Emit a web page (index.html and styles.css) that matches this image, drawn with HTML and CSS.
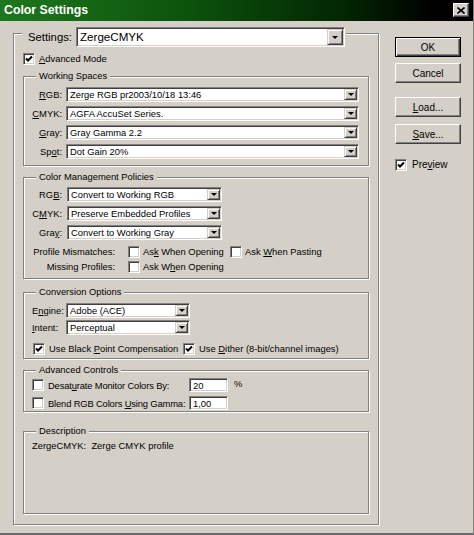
FILE: index.html
```html
<!DOCTYPE html>
<html>
<head>
<meta charset="utf-8">
<title>Color Settings</title>
<link rel="stylesheet" href="styles.css">
</head>
<body>
<div class="window">
  <div class="titlebar">
    <span class="title">Color Settings</span>
    <span class="close"><svg width="8" height="7" viewBox="0 0 8 7"><path d="M0.5 0.5 L7.5 6.5 M7.5 0.5 L0.5 6.5" stroke="#000" stroke-width="1.6" fill="none"/></svg></span>
  </div>
  <div class="client">
    <div class="main-group">
      <div class="settings-legend">
        <span class="settings-label">Settings:</span>
        <div class="combo combo-large"><span class="combo-text">ZergeCMYK</span><span class="combo-btn"><i class="tri"></i></span></div>
      </div>

      <div class="check adv-mode"><span class="box"><svg class="tick" viewBox="0 0 8 8"><path d="M1 3.5 L3 5.5 L7 1.5" stroke="#000" stroke-width="2" fill="none"/></svg></span><span><u>A</u>dvanced Mode</span></div>

      <div class="group ws">
        <div class="legend">Working Spaces</div>
        <div class="grid ws-grid">
          <span class="lbl"><u>R</u>GB:</span>
          <div class="combo"><span class="combo-text">Zerge RGB pr2003/10/18 13:46</span><span class="combo-btn"><i class="tri"></i></span></div>
          <span class="lbl"><u>C</u>MYK:</span>
          <div class="combo"><span class="combo-text">AGFA AccuSet Series.</span><span class="combo-btn"><i class="tri"></i></span></div>
          <span class="lbl"><u>G</u>ray:</span>
          <div class="combo"><span class="combo-text">Gray Gamma 2.2</span><span class="combo-btn"><i class="tri"></i></span></div>
          <span class="lbl">Sp<u>o</u>t:</span>
          <div class="combo"><span class="combo-text">Dot Gain 20%</span><span class="combo-btn"><i class="tri"></i></span></div>
        </div>
      </div>

      <div class="group cmp">
        <div class="legend">Color Management Policies</div>
        <div class="grid cmp-grid">
          <span class="lbl">RG<u>B</u>:</span>
          <div class="combo"><span class="combo-text">Convert to Working RGB</span><span class="combo-btn"><i class="tri"></i></span></div>
          <span class="lbl">C<u>M</u>YK:</span>
          <div class="combo"><span class="combo-text">Preserve Embedded Profiles</span><span class="combo-btn"><i class="tri"></i></span></div>
          <span class="lbl">Gra<u>y</u>:</span>
          <div class="combo"><span class="combo-text">Convert to Working Gray</span><span class="combo-btn"><i class="tri"></i></span></div>
        </div>
        <div class="policy-row first">
          <span class="policy-lbl">Profile Mismatches:</span>
          <div class="check opt1"><span class="box"></span><span>As<u>k</u> When Opening</span></div>
          <div class="check"><span class="box"></span><span>Ask <u>W</u>hen Pasting</span></div>
        </div>
        <div class="policy-row">
          <span class="policy-lbl">Missing Profiles:</span>
          <div class="check opt1"><span class="box"></span><span>Ask W<u>h</u>en Opening</span></div>
        </div>
      </div>

      <div class="group conv">
        <div class="legend">Conversion Options</div>
        <div class="grid conv-grid">
          <span class="lbl-left">E<u>n</u>gine:</span>
          <div class="combo"><span class="combo-text">Adobe (ACE)</span><span class="combo-btn"><i class="tri"></i></span></div>
          <span class="lbl-left"><u>I</u>ntent:</span>
          <div class="combo"><span class="combo-text">Perceptual</span><span class="combo-btn"><i class="tri"></i></span></div>
        </div>
        <div class="conv-row">
          <div class="check bpc"><span class="box"><svg class="tick" viewBox="0 0 8 8"><path d="M1 3.5 L3 5.5 L7 1.5" stroke="#000" stroke-width="2" fill="none"/></svg></span><span>Use Black <u>P</u>oint Compensation</span></div>
          <div class="check"><span class="box"><svg class="tick" viewBox="0 0 8 8"><path d="M1 3.5 L3 5.5 L7 1.5" stroke="#000" stroke-width="2" fill="none"/></svg></span><span>Use <u>D</u>ither (8-bit/channel images)</span></div>
        </div>
      </div>

      <div class="group adv">
        <div class="legend">Advanced Controls</div>
        <div class="adv-grid">
          <span class="box"></span>
          <span class="adv-lbl">Desat<u>u</u>rate Monitor Colors By:</span>
          <span class="field">20</span>
          <span class="pct">%</span>
          <span class="box"></span>
          <span class="adv-lbl">Blend RGB Colors <u>U</u>sing Gamma:</span>
          <span class="field">1,00</span>
          <span></span>
        </div>
      </div>

      <div class="group desc">
        <div class="legend">Description</div>
        <div class="desc-text">ZergeCMYK:  Zerge CMYK profile</div>
      </div>
    </div>

    <div class="side">
      <div class="btn btn-default">OK</div>
      <div class="btn cancel">Cancel</div>
      <div class="btn load"><u>L</u>oad...</div>
      <div class="btn save"><u>S</u>ave...</div>
      <div class="check preview"><span class="box"><svg class="tick" viewBox="0 0 8 8"><path d="M1 3.5 L3 5.5 L7 1.5" stroke="#000" stroke-width="2" fill="none"/></svg></span><span>Pre<u>v</u>iew</span></div>
    </div>
  </div>
</div>
</body>
</html>
```

FILE: styles.css
```css
* { box-sizing: border-box; }

html, body {
  margin: 0;
  padding: 0;
  background: #d4d0c8;
}

body {
  font-family: "Liberation Sans", Arial, sans-serif;
  font-size: 9.4px;
  color: #000;
}

u {
  text-decoration: underline;
  text-underline-offset: 1px;
}

.window {
  width: 474px;
  height: 535px;
  display: flex;
  flex-direction: column;
  background: #d4d0c8;
  border-bottom: 2px solid #6a6a6a;
  border-right: 1px solid #808080;
  overflow: hidden;
}

/* title bar */
.titlebar {
  height: 21px;
  flex: none;
  display: flex;
  align-items: center;
  justify-content: space-between;
  padding: 0 4px 1px 4px;
  background: linear-gradient(90deg, #1d781d 0%, #0c520c 40%, #022202 75%, #000 92%);
}

.title {
  color: #fff;
  font-weight: bold;
  font-size: 12.3px;
  line-height: 14px;
}

.close {
  width: 16px;
  height: 14px;
  background: #d4d0c8;
  border: 1px solid;
  border-color: #fff #404040 #404040 #fff;
  box-shadow: inset -1px -1px 0 #808080;
  display: flex;
  align-items: center;
  justify-content: center;
}

/* client */
.client {
  flex: 1;
  display: flex;
  align-items: flex-start;
}

.main-group {
  margin: 12px 0 0 13px;
  width: 366px;
  height: 492px;
  border: 1px solid #808080;
  box-shadow: inset 1px 1px 0 #fff, 1px 1px 0 #fff;
  padding: 0 9px;
  display: flex;
  flex-direction: column;
}

.settings-legend {
  align-self: flex-start;
  margin: -7px 0 0 -1px;
  padding: 0 1px 0 6px;
  display: flex;
  align-items: center;
  gap: 5px;
  background: #d4d0c8;
}

.settings-label {
  font-size: 11.3px;
  width: 43px;
  white-space: nowrap;
}

/* generic widgets */
.combo {
  display: flex;
  height: 15px;
  background: #fff;
  border: 1px solid;
  border-color: #808080 #fff #fff #808080;
  box-shadow: inset 1px 1px 0 #404040, inset -1px -1px 0 #d4d0c8;
  padding: 1px;
}

.combo-text {
  flex: 1;
  padding-left: 2px;
  line-height: 11px;
  white-space: nowrap;
  overflow: hidden;
}

.combo-btn {
  width: 13px;
  flex: none;
  background: #d4d0c8;
  border: 1px solid;
  border-color: #d4d0c8 #404040 #404040 #d4d0c8;
  box-shadow: inset 1px 1px 0 #fff, inset -1px -1px 0 #808080;
  display: flex;
  align-items: center;
  justify-content: center;
}

.tri {
  display: block;
  width: 0;
  height: 0;
  border-left: 3px solid transparent;
  border-right: 3px solid transparent;
  border-top: 3px solid #000;
}

.combo-large {
  width: 269px;
  height: 20px;
}

.combo-large .combo-text {
  font-size: 11.6px;
  line-height: 16px;
}

.combo-large .combo-btn {
  width: 16px;
}

.box {
  width: 12px;
  height: 12px;
  flex: none;
  background: #fff;
  border: 1px solid;
  border-color: #808080 #fff #fff #808080;
  box-shadow: inset 1px 1px 0 #404040, inset -1px -1px 0 #d4d0c8;
  display: flex;
  align-items: center;
  justify-content: center;
}

.tick {
  width: 8px;
  height: 8px;
  display: block;
}

.check {
  display: flex;
  align-items: center;
  gap: 4px;
  height: 13px;
  white-space: nowrap;
}

.adv-mode {
  margin-top: 5px;
}

/* group boxes */
.group {
  border: 1px solid #808080;
  box-shadow: inset 1px 1px 0 #fff, 1px 1px 0 #fff;
  display: flex;
  flex-direction: column;
  margin-top: 11px;
}

.legend {
  align-self: flex-start;
  margin: -7px 0 0 12px;
  padding: 0 3px;
  background: #d4d0c8;
  line-height: 12px;
  white-space: nowrap;
}

.grid {
  display: grid;
  align-items: center;
  row-gap: 4px;
  margin-top: 5px;
}

.lbl {
  text-align: right;
  white-space: nowrap;
}

.lbl-left {
  padding-left: 8px;
  white-space: nowrap;
}

.ws-grid {
  grid-template-columns: 38px 293px;
  column-gap: 4px;
  padding-bottom: 6px;
}

.cmp-grid {
  grid-template-columns: 38px 155px;
  column-gap: 5px;
  margin-top: 4px;
}

.policy-row {
  display: flex;
  align-items: center;
  height: 13px;
  margin-top: 2px;
}

.policy-row.first {
  margin-top: 5px;
}

.cmp {
  padding-bottom: 5px;
}

.policy-lbl {
  width: 91px;
  text-align: right;
  white-space: nowrap;
  margin-right: 13px;
}

.policy-row .check {
  gap: 3px;
}

.opt1 {
  width: 102px;
}

.conv {
  margin-top: 13px;
  padding-bottom: 3px;
}

.conv-grid {
  grid-template-columns: 42px 124px;
  row-gap: 2px;
  margin-top: 5px;
}

.conv-row {
  display: flex;
  align-items: center;
  margin-top: 7px;
  padding-left: 9px;
}

.bpc {
  width: 150px;
}

.adv {
  padding-bottom: 1px;
}

.adv-grid {
  display: grid;
  grid-template-columns: 12px 145px 39px auto;
  grid-auto-rows: 14px;
  row-gap: 4px;
  align-items: center;
  margin-top: 2px;
  padding-left: 8px;
}

.adv-lbl {
  padding-left: 4px;
  white-space: nowrap;
  letter-spacing: -0.15px;
}

.field {
  height: 14px;
  background: #fff;
  border: 1px solid;
  border-color: #808080 #fff #fff #808080;
  box-shadow: inset 1px 1px 0 #404040, inset -1px -1px 0 #d4d0c8;
  padding: 1px 2px 0 3px;
  line-height: 11px;
}

.pct {
  padding-left: 6px;
  align-self: start;
}

.desc {
  margin-top: 19px;
  margin-bottom: 10px;
  flex: 1;
}

.desc-text {
  margin-top: 3px;
  padding-left: 8px;
  line-height: 12px;
  white-space: pre;
}

/* right column */
.side {
  margin: 16px 0 0 16px;
  display: flex;
  flex-direction: column;
}

.btn {
  width: 66px;
  height: 20px;
  border: 1px solid;
  border-color: #fff #404040 #404040 #fff;
  box-shadow: inset -1px -1px 0 #808080;
  display: flex;
  align-items: center;
  justify-content: center;
  font-size: 10px;
}

.btn-default {
  border: 1px solid #000;
  box-shadow: inset 1px 1px 0 #fff, inset -1px -1px 0 #404040, inset -2px -2px 0 #808080;
}

.cancel { margin-top: 6px; }
.load { margin-top: 14px; }
.save { margin-top: 7px; }

.preview {
  margin-top: 14px;
  gap: 5px;
  font-size: 10px;
}
```
